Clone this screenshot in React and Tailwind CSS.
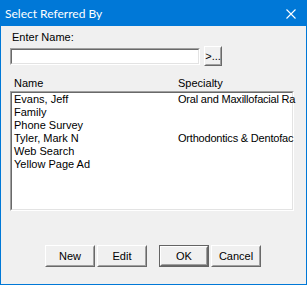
import React from 'react'

const rows = [
  { name: 'Evans, Jeff', specialty: 'Oral and Maxillofacial Ra' },
  { name: 'Family', specialty: '' },
  { name: 'Phone Survey', specialty: '' },
  { name: 'Tyler, Mark N', specialty: 'Orthodontics & Dentofac' },
  { name: 'Web Search', specialty: '' },
  { name: 'Yellow Page Ad', specialty: '' },
]

function Sunken({ className = '', children }) {
  return (
    <div className={`border border-t-[#a0a0a0] border-l-[#a0a0a0] border-b-white border-r-white ${className}`}>
      <div className="h-full border border-t-[#696969] border-l-[#696969] border-b-[#e3e3e3] border-r-[#e3e3e3] bg-white">
        {children}
      </div>
    </div>
  )
}

function Raised({ className = '', label }) {
  return (
    <div className={`border border-t-white border-l-white border-b-[#696969] border-r-[#696969] ${className}`}>
      <div className="flex h-full items-center justify-center border border-t-[#f0f0f0] border-l-[#f0f0f0] border-b-[#a0a0a0] border-r-[#a0a0a0] bg-[#f0f0f0] text-black">
        {label}
      </div>
    </div>
  )
}

export default function App() {
  return (
    <div className="flex h-[285px] w-[307px] flex-col bg-[#0078d7] font-['Liberation_Sans',Arial,sans-serif] text-[11px] leading-[13px] text-black">
      {/* title bar */}
      <div className="flex h-[26px] flex-none items-center justify-between pl-[5px] pr-[11px] text-white">
        <span className="font-['Lato',sans-serif] text-[12px]">Select Referred By</span>
        <svg width="10" height="10" viewBox="0 0 10 10" className="mt-[1px]">
          <path d="M0.5 0.5 L9.5 9.5 M9.5 0.5 L0.5 9.5" stroke="white" strokeWidth="1.1" fill="none" />
        </svg>
      </div>

      <div className="mx-[1px] mb-[1px] flex-1 bg-[#f0f0f0] pl-[9px] pt-[5px]">
        <div className="pl-[2px]">Enter Name:</div>
        <div className="mt-[2px] flex items-start gap-[4px]">
          <Sunken className="mt-[2px] h-[17px] w-[190px]" />
          <Raised className="h-[20px] w-[18px]" label=">..." />
        </div>

        <div className="mt-[11px] flex pl-[4px]">
          <span className="w-[164px]">Name</span>
          <span>Specialty</span>
        </div>

        <Sunken className="mt-[1px] h-[120px] w-[284px]">
          <div className="whitespace-nowrap pl-[2px]">
            {rows.map((r) => (
              <div key={r.name} className="flex h-[13px]">
                <span className="w-[164px] flex-none">{r.name}</span>
                <span className="tracking-[-0.2px]">{r.specialty}</span>
              </div>
            ))}
          </div>
        </Sunken>

        <div className="mt-[34px] flex pl-[35px]">
          <Raised className="h-[22px] w-[50px]" label="New" />
          <Raised className="ml-[2px] h-[22px] w-[50px]" label="Edit" />
          <div className="ml-[12px] h-[22px] w-[50px] border border-[#646464]">
            <Raised className="h-full w-full" label="OK" />
          </div>
          <Raised className="ml-[2px] h-[22px] w-[50px]" label="Cancel" />
        </div>
      </div>
    </div>
  )
}
